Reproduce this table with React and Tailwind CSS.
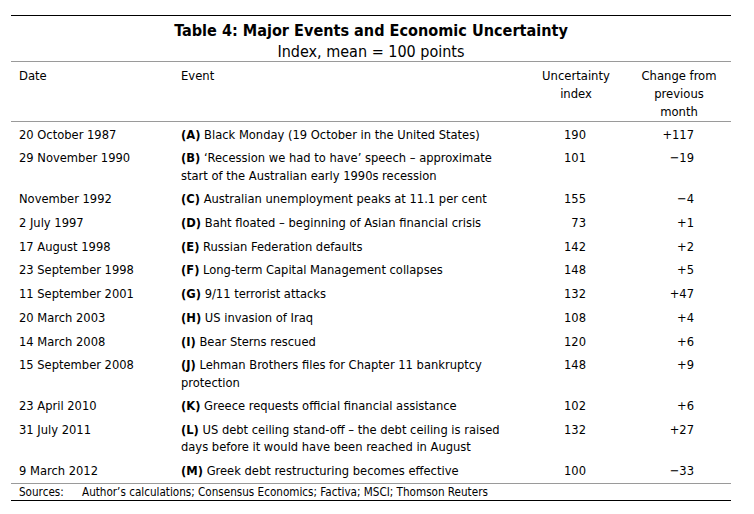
import React from 'react';

const rows = [
  { date: '20 October 1987', tag: '(A)', text: ['Black Monday (19 October in the United States)'], index: '190', change: '+117' },
  { date: '29 November 1990', tag: '(B)', text: ['\u2018Recession we had to have\u2019 speech \u2013 approximate', 'start of the Australian early 1990s recession'], index: '101', change: '\u221219' },
  { date: 'November 1992', tag: '(C)', text: ['Australian unemployment peaks at 11.1 per cent'], index: '155', change: '\u22124' },
  { date: '2 July 1997', tag: '(D)', text: ['Baht floated \u2013 beginning of Asian financial crisis'], index: '73', change: '+1' },
  { date: '17 August 1998', tag: '(E)', text: ['Russian Federation defaults'], index: '142', change: '+2' },
  { date: '23 September 1998', tag: '(F)', text: ['Long-term Capital Management collapses'], index: '148', change: '+5' },
  { date: '11 September 2001', tag: '(G)', text: ['9/11 terrorist attacks'], index: '132', change: '+47' },
  { date: '20 March 2003', tag: '(H)', text: ['US invasion of Iraq'], index: '108', change: '+4' },
  { date: '14 March 2008', tag: '(I)', text: ['Bear Sterns rescued'], index: '120', change: '+6' },
  { date: '15 September 2008', tag: '(J)', text: ['Lehman Brothers files for Chapter 11 bankruptcy', 'protection'], index: '148', change: '+9' },
  { date: '23 April 2010', tag: '(K)', text: ['Greece requests official financial assistance'], index: '102', change: '+6' },
  { date: '31 July 2011', tag: '(L)', text: ['US debt ceiling stand-off \u2013 the debt ceiling is raised', 'days before it would have been reached in August'], index: '132', change: '+27' },
  { date: '9 March 2012', tag: '(M)', text: ['Greek debt restructuring becomes effective'], index: '100', change: '\u221233' }
];

export default function App() {
  return (
    <div className="w-[754px] h-[514px] bg-white text-black pt-[15px] pl-[11px] font-['DejaVu_Sans_Condensed','DejaVu_Sans',sans-serif]">
      <div className="w-[720px] border-t border-black">
        {/* Title block */}
        <div className="border-b border-[#9a9a9a] text-center">
          <h1 className="pt-[5px] text-[16.1px] font-bold leading-[20px]">Table 4: Major Events and Economic Uncertainty</h1>
          <p className="mt-[2px] text-[16px] leading-[18px]">Index, mean = 100 points</p>
        </div>

        {/* Column headers */}
        <div className="flex pl-[8px] pt-[5px] text-[12.9px] leading-[18px] border-b border-[#9a9a9a] h-[60px]">
          <div className="w-[162px]">Date</div>
          <div className="w-[360px]">Event</div>
          <div className="w-[70px] text-center whitespace-nowrap">Uncertainty<br />index</div>
          <div className="w-[76px] ml-[30px] text-center whitespace-nowrap">Change from<br />previous<br />month</div>
        </div>

        {/* Rows */}
        <div className="border-b border-[#9a9a9a] pt-[0.5px]">
          {rows.map(r => (
            <div key={r.date} className="flex pl-[8px] py-[3.15px] text-[12.8px] leading-[17.4px]">
              <div className="w-[162px] whitespace-nowrap">{r.date}</div>
              <div className="w-[360px] whitespace-nowrap">
                <span className="font-bold">{r.tag}</span> {r.text[0]}
                {r.text[1] && (<><br />{r.text[1]}</>)}
              </div>
              <div className="w-[70px] text-right pr-[25px]">{r.index}</div>
              <div className="w-[76px] ml-[30px] text-right pr-[23px]">{r.change}</div>
            </div>
          ))}
        </div>

        {/* Sources */}
        <div className="flex pl-[8px] h-[17px] pt-[3px] items-center text-[11.6px] border-b-[1.5px] border-black">
          <div className="w-[63px]">Sources:</div>
          <div>Author&rsquo;s calculations; Consensus Economics; Factiva; MSCI; Thomson Reuters</div>
        </div>
      </div>
    </div>
  );
}
